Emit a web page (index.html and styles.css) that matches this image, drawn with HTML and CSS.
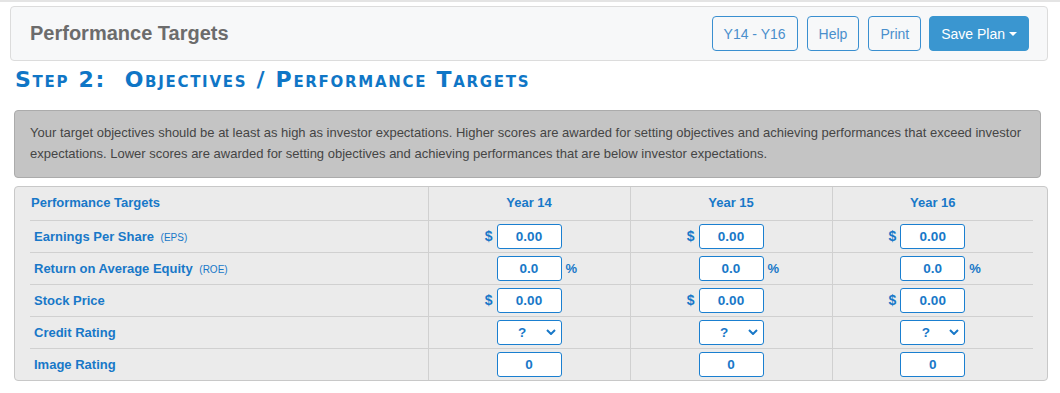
FILE: index.html
```html
<!DOCTYPE html>
<html lang="en">
<head>
    <meta charset="UTF-8">
    <meta name="viewport" content="width=device-width, initial-scale=1.0">
    <title>Performance Targets</title>
    <link rel="stylesheet" href="styles.css">
</head>
<body>
    <div class="top-rule"></div>
    <div class="page">
        <div class="page-header">
            <h2 class="page-title">Performance Targets</h2>
            <div class="actions">
                <button class="btn btn-outline">Y14 - Y16</button>
                <button class="btn btn-outline">Help</button>
                <button class="btn btn-outline">Print</button>
                <button class="btn btn-primary">Save Plan<span class="caret"></span></button>
            </div>
        </div>

        <h1 class="step-title">Step 2:&nbsp; Objectives / Performance Targets</h1>

        <div class="info-box">
            Your target objectives should be at least as high as investor expectations. Higher scores are awarded for setting objectives and achieving performances that exceed investor
            expectations. Lower scores are awarded for setting objectives and achieving performances that are below investor expectations.
        </div>

        <div class="targets">
            <table class="targets-table">
                <thead>
                    <tr>
                        <th class="label-col">Performance Targets</th>
                        <th>Year 14</th>
                        <th>Year 15</th>
                        <th>Year 16</th>
                    </tr>
                </thead>
                <tbody id="target-rows">
                    <!-- rows built below -->
                </tbody>
            </table>
        </div>
    </div>

    <script>
    const targets = [
        { name: 'Earnings Per Share', abbr: '(EPS)', kind: 'input', value: '0.00', pre: '$' },
        { name: 'Return on Average Equity', abbr: '(ROE)', kind: 'input', value: '0.0', post: '%' },
        { name: 'Stock Price', kind: 'input', value: '0.00', pre: '$' },
        { name: 'Credit Rating', kind: 'select' },
        { name: 'Image Rating', kind: 'input', value: '0' }
    ];

    const rowsHtml = targets.map(t => {
        const cell = () => {
            const field = t.kind === 'select'
                ? `<select class="field field-select"><option>?</option><option>AAA</option><option>AA</option><option>A</option><option>BBB</option><option>BB</option></select>`
                : `<input class="field" type="text" value="${t.value}">`;
            return `
                <td>
                    <div class="field-wrap">
                        <span class="pre">${t.pre || ''}</span>
                        ${field}
                        <span class="post">${t.post || ''}</span>
                    </div>
                </td>`;
        };
        return `
            <tr>
                <td class="label-col">${t.name}${t.abbr ? ` <span class="abbr">${t.abbr}</span>` : ''}</td>
                ${cell()}${cell()}${cell()}
            </tr>`;
    }).join('');

    document.getElementById('target-rows').innerHTML = rowsHtml;
    </script>
</body>
</html>
```

FILE: styles.css
```css
:root {
    --link-blue: #1878c8;
    --btn-blue: #3a96d0;
    --border-gray: #d0d0d0;
    --panel-gray: #ebebeb;
}

* {
    box-sizing: border-box;
}

body {
    margin: 0;
    padding: 0;
    font-family: 'Liberation Sans', Arial, sans-serif;
    background: #ffffff;
}

.top-rule {
    height: 2px;
    background-color: #e4e4e4;
}

.page {
    padding: 4px 12px 0 10px;
}

.page-header {
    display: flex;
    align-items: center;
    justify-content: space-between;
    height: 55px;
    padding: 0 18px 0 19px;
    background-color: #f7f8f9;
    border: 1px solid #dcdcdc;
    border-radius: 4px;
}

.page-title {
    margin: 0;
    font-size: 20px;
    font-weight: bold;
    color: #6c6c6c;
}

.actions {
    display: flex;
    gap: 9px;
}

.btn {
    height: 35px;
    padding: 0 11px;
    font-family: 'Liberation Sans', Arial, sans-serif;
    font-size: 14px;
    white-space: nowrap;
    border-radius: 4px;
    cursor: pointer;
}

.btn-outline {
    background-color: transparent;
    color: #4a8fcc;
    border: 1px solid #3a8fd0;
}

.btn-primary {
    background-color: var(--btn-blue);
    color: #ffffff;
    border: 1px solid var(--btn-blue);
    padding: 0 11px;
    margin-left: -1px;
}

.caret {
    display: inline-block;
    margin-left: 4px;
    vertical-align: 3px;
    border-top: 4px solid #ffffff;
    border-left: 4px solid transparent;
    border-right: 4px solid transparent;
}

.step-title {
    margin: 5px 0 0 5px;
    font-family: 'DejaVu Sans', 'Liberation Sans', sans-serif;
    font-size: 22px;
    font-weight: bold;
    font-variant: small-caps;
    letter-spacing: 1.7px;
    color: #0f76c6;
    line-height: 27px;
}

.info-box {
    margin: 17px 7px 0 4px;
    padding: 11px 15px 13px 15px;
    background-color: #c4c4c4;
    border: 1px solid #ababab;
    border-radius: 4px;
    color: #454545;
    font-size: 13px;
    line-height: 21px;
}

.targets {
    margin: 8px 0 0 4px;
    padding: 0 14px 0 15px;
    background-color: var(--panel-gray);
    border: 1px solid #c8c8c8;
    border-radius: 4px;
}

.targets-table {
    width: 100%;
    border-collapse: collapse;
}

.targets-table th,
.targets-table td {
    padding: 0;
    color: var(--link-blue);
    font-size: 13px;
    font-weight: bold;
    text-align: center;
    border-left: 1px solid var(--border-gray);
}

.targets-table th {
    height: 33px;
    padding-bottom: 2px;
}

.targets-table td {
    height: 32px;
    border-top: 1px solid var(--border-gray);
}

.targets-table .label-col {
    width: 398px;
    text-align: left;
    padding-left: 4px;
    border-left: none;
}

.targets-table th.label-col {
    padding-left: 1px;
}

.abbr {
    margin-left: 3px;
    font-size: 10px;
    font-weight: normal;
}

.field-wrap {
    display: grid;
    grid-template-columns: 1fr 65px 1fr;
    align-items: center;
    gap: 4px;
}

.pre {
    text-align: right;
    font-size: 14px;
}

.post {
    text-align: left;
    font-size: 13px;
}

.field {
    width: 65px;
    height: 25px;
    padding: 0;
    font-family: 'Liberation Sans', Arial, sans-serif;
    font-size: 13.5px;
    font-weight: bold;
    color: var(--link-blue);
    text-align: center;
    background-color: #ffffff;
    border: 1px solid #1a7fd0;
    border-radius: 3px;
}

.field-select {
    appearance: none;
    -webkit-appearance: none;
    padding: 0 20px 0 6px;
    text-align: center;
    text-align-last: center;
    background-image: url("data:image/svg+xml,%3Csvg xmlns='http://www.w3.org/2000/svg' width='10' height='6' viewBox='0 0 10 6'%3E%3Cpath d='M1 1l4 4 4-4' fill='none' stroke='%231878c8' stroke-width='2'/%3E%3C/svg%3E");
    background-repeat: no-repeat;
    background-position: right 5px center;
}
```
